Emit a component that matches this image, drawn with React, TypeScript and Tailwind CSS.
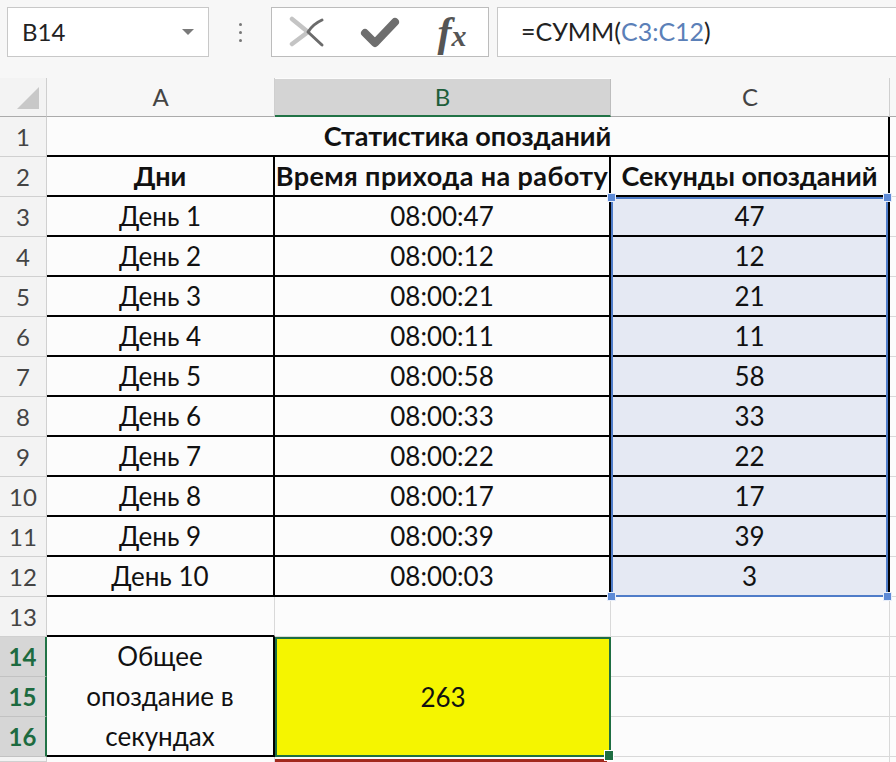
import React from 'react';

const font = "font-['Lato','Open_Sans',sans-serif]";

const days = [
  ['День 1', '08:00:47', '47'],
  ['День 2', '08:00:12', '12'],
  ['День 3', '08:00:21', '21'],
  ['День 4', '08:00:11', '11'],
  ['День 5', '08:00:58', '58'],
  ['День 6', '08:00:33', '33'],
  ['День 7', '08:00:22', '22'],
  ['День 8', '08:00:17', '17'],
  ['День 9', '08:00:39', '39'],
  ['День 10', '08:00:03', '3'],
];

const cell = 'flex items-center justify-center text-[26px] text-[#111] whitespace-nowrap';
const bold = 'text-[27px] font-bold';
const gray = 'border-b border-r border-[#d9d9d9]';
const black = 'border-b-2 border-r-2 border-black';

const RowHead = ({ n, active }: { n?: number; active?: boolean }) =>
  active ? (
    <div className="flex items-center justify-center text-[24px] font-bold text-[#1d6b40] bg-[#d6d6d6] border-b border-[#c2c2c2] border-r-2 border-r-[#217346]">
      {n}
    </div>
  ) : (
    <div className="flex items-center justify-center text-[24px] text-[#444] bg-[#f3f3f3] border-b border-r border-[#d0d0d0]">
      {n}
    </div>
  );

const Handle = ({ pos }: { pos: string }) => (
  <div className={`absolute w-[9px] h-[9px] bg-[#5d8ad6] border border-[#e8eefa] ${pos}`} />
);

export default function App() {
  return (
    <div className={`${font} w-[896px] h-[762px] overflow-hidden bg-[#fcfcfc]`}>
      {/* formula bar */}
      <div className="h-[78px] bg-[#f7f7f7] flex items-start pt-[7px]">
        <div className="ml-[7px] w-[202px] h-[50px] bg-white border border-[#c8c8c8] flex items-center justify-between pl-[14px] pr-[14px]">
          <span className="text-[24px] text-[#222]">B14</span>
          <svg width="12" height="7" viewBox="0 0 12 7">
            <polygon points="0,0 12,0 6,6" fill="#7a7a7a" />
          </svg>
        </div>
        <div className="w-[62px] h-[50px] flex flex-col items-center justify-center gap-[5px]">
          <div className="w-[3px] h-[3px] rounded-full bg-[#777]" />
          <div className="w-[3px] h-[3px] rounded-full bg-[#777]" />
          <div className="w-[3px] h-[3px] rounded-full bg-[#777]" />
        </div>
        <div className="w-[218px] h-[50px] bg-white border border-[#bcbcbc] flex items-center">
          <div className="w-[72px] flex justify-center">
            <svg width="38" height="32" viewBox="0 0 38 32">
              <path d="M3 3 L19 16 L3 28" stroke="#c4c4c4" strokeWidth="4.5" fill="none" strokeLinecap="round" strokeLinejoin="round" />
              <path d="M33 4 Q24 8 19 16 L33 29" stroke="#6b6b6b" strokeWidth="3" fill="none" strokeLinecap="round" strokeLinejoin="round" />
            </svg>
          </div>
          <div className="w-[72px] flex justify-center">
            <svg width="40" height="32" viewBox="0 0 40 32">
              <path d="M5 17 L15 27 L35 6" stroke="#6e6e6e" strokeWidth="8" fill="none" strokeLinecap="round" strokeLinejoin="round" />
            </svg>
          </div>
          <div className="w-[72px] flex justify-center">
            <span className="font-['Liberation_Serif',serif] italic font-bold text-[42px] leading-none text-[#555]">
              f<span className="text-[30px]">x</span>
            </span>
          </div>
        </div>
        <div className="ml-[8px] flex-1 h-[50px] bg-white border border-r-0 border-[#c8c8c8] flex items-center pl-[23px] text-[25px] text-[#222]">
          <span>=СУММ(</span>
          <span className="text-[#5b80b8]">C3:C12</span>
          <span>)</span>
        </div>
      </div>

      {/* sheet */}
      <div className="grid grid-cols-[47px_228px_336px_279px_6px] grid-rows-[39px_repeat(16,40px)_5px]">
        {/* column headers */}
        <div className="bg-[#f3f3f3] border-r border-b border-[#ababab] border-r-[#cfcfcf] flex items-end justify-end pr-[7px] pb-[7px]">
          <svg width="22" height="22" viewBox="0 0 22 22">
            <polygon points="22,0 22,22 0,22" fill="#c8c8c8" />
          </svg>
        </div>
        <div className="flex items-center justify-center text-[24px] text-[#444] bg-[#f7f7f7] border-b border-b-[#ababab] border-r border-r-[#cfcfcf]">A</div>
        <div className="flex items-center justify-center text-[24px] text-[#1d5e3a] bg-[#d4d4d4] border-b-2 border-b-[#217346] border-r border-r-[#bdbdbd] mt-[1px]">B</div>
        <div className="flex items-center justify-center text-[24px] text-[#444] bg-[#f7f7f7] border-b border-b-[#ababab] border-r border-r-[#cfcfcf]">C</div>
        <div className="bg-[#f7f7f7] border-b border-[#ababab]" />

        {/* row 1 */}
        <RowHead n={1} />
        <div className={`${cell} ${bold} col-span-3 ${black}`}>Статистика опозданий</div>
        <div className="border-b border-[#d9d9d9]" />

        {/* row 2 */}
        <RowHead n={2} />
        <div className={`${cell} ${bold} ${black}`}>Дни</div>
        <div className={`${cell} ${bold} ${black} tracking-[0.4px]`}>Время прихода на работу</div>
        <div className={`${cell} ${bold} ${black}`}>Секунды опозданий</div>
        <div className="border-b border-[#d9d9d9]" />

        {days.map(([d, t, s], i) => (
          <React.Fragment key={d}>
            <RowHead n={i + 3} />
            <div className={`${cell} ${black}`}>{d}</div>
            <div className={`${cell} ${black}`}>{t}</div>
            <div className={`${cell} ${black} bg-[#e5e9f3] ${i === 0 ? 'relative' : ''}`}>
              {s}
              {i === 0 && (
                <div className="absolute left-0 top-0 w-full h-[400px] border-2 border-[#4f7cc8] z-10 pointer-events-none">
                  <Handle pos="-left-[6px] -top-[6px]" />
                  <Handle pos="-right-[6px] -top-[6px]" />
                  <Handle pos="-left-[6px] -bottom-[6px]" />
                  <Handle pos="-right-[6px] -bottom-[6px]" />
                </div>
              )}
            </div>
            <div className="border-b border-[#d9d9d9]" />
          </React.Fragment>
        ))}

        {/* row 13 */}
        <RowHead n={13} />
        <div className="border-b-2 border-b-black border-r border-r-[#d9d9d9]" />
        <div className={gray} />
        <div className={gray} />
        <div className="border-b border-[#d9d9d9]" />

        {/* row 14 */}
        <RowHead n={14} active />
        <div className={`row-span-3 ${black} flex flex-col items-center justify-center text-[26px] text-[#111] leading-[40px]`}>
          <span>Общее</span>
          <span>опоздание в</span>
          <span>секундах</span>
        </div>
        <div className="row-span-3 relative bg-[#f5f500] border-2 border-[#1e6e42] flex items-center justify-center text-[26px] text-[#111]">
          263
          <div className="absolute -right-[5px] -bottom-[6px] w-[10px] h-[11px] bg-[#1e6e42] border border-white z-10" />
        </div>
        <div className={gray} />
        <div className="border-b border-[#d9d9d9]" />

        {/* row 15 */}
        <RowHead n={15} active />
        <div className={gray} />
        <div className="border-b border-[#d9d9d9]" />

        {/* row 16 */}
        <RowHead n={16} active />
        <div className={gray} />
        <div className="border-b border-[#d9d9d9]" />

        {/* row 17 (partial) */}
        <RowHead />
        <div className="border-r border-[#d9d9d9]" />
        <div className="pt-[2px] pr-[4px]">
          <div className="h-full bg-[#a2291d]" />
        </div>
        <div className="border-r border-[#d9d9d9]" />
        <div />
      </div>
    </div>
  );
}
